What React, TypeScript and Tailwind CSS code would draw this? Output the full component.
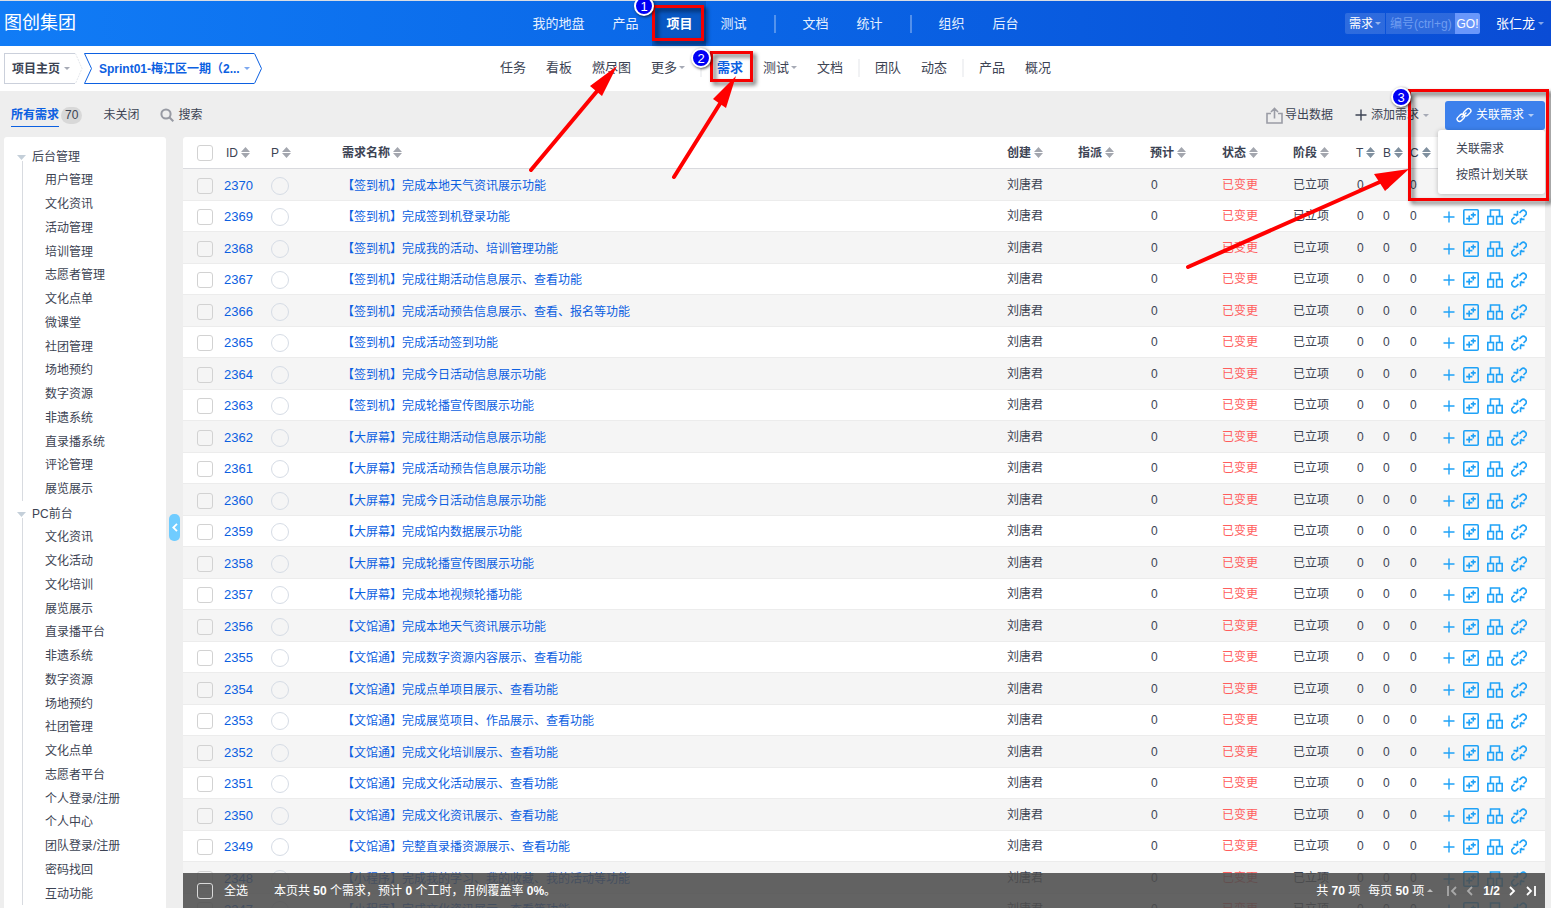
import { ReactNode } from "react";

type Story = { id: number; title: string };
type TreeGroup = { name: string; children: string[] };

const mainNav = [["我的地盘", "产品", "项目", "测试"], ["文档", "统计"], ["组织", "后台"]];

const subNav = [
  [{ name: "任务" }, { name: "看板" }, { name: "燃尽图" }, { name: "更多", caret: true }],
  [{ name: "需求" }, { name: "测试", caret: true }, { name: "文档" }],
  [{ name: "团队" }, { name: "动态" }],
  [{ name: "产品" }, { name: "概况" }],
];

const tree: TreeGroup[] = [
  {
    name: "后台管理",
    children: ["用户管理", "文化资讯", "活动管理", "培训管理", "志愿者管理", "文化点单", "微课堂", "社团管理", "场地预约", "数字资源", "非遗系统", "直录播系统", "评论管理", "展览展示"],
  },
  {
    name: "PC前台",
    children: ["文化资讯", "文化活动", "文化培训", "展览展示", "直录播平台", "非遗系统", "数字资源", "场地预约", "社团管理", "文化点单", "志愿者平台", "个人登录/注册", "个人中心", "团队登录/注册", "密码找回", "互动功能"],
  },
];

const stories: Story[] = [
  { id: 2370, title: "【签到机】完成本地天气资讯展示功能" },
  { id: 2369, title: "【签到机】完成签到机登录功能" },
  { id: 2368, title: "【签到机】完成我的活动、培训管理功能" },
  { id: 2367, title: "【签到机】完成往期活动信息展示、查看功能" },
  { id: 2366, title: "【签到机】完成活动预告信息展示、查看、报名等功能" },
  { id: 2365, title: "【签到机】完成活动签到功能" },
  { id: 2364, title: "【签到机】完成今日活动信息展示功能" },
  { id: 2363, title: "【签到机】完成轮播宣传图展示功能" },
  { id: 2362, title: "【大屏幕】完成往期活动信息展示功能" },
  { id: 2361, title: "【大屏幕】完成活动预告信息展示功能" },
  { id: 2360, title: "【大屏幕】完成今日活动信息展示功能" },
  { id: 2359, title: "【大屏幕】完成馆内数据展示功能" },
  { id: 2358, title: "【大屏幕】完成轮播宣传图展示功能" },
  { id: 2357, title: "【大屏幕】完成本地视频轮播功能" },
  { id: 2356, title: "【文馆通】完成本地天气资讯展示功能" },
  { id: 2355, title: "【文馆通】完成数字资源内容展示、查看功能" },
  { id: 2354, title: "【文馆通】完成点单项目展示、查看功能" },
  { id: 2353, title: "【文馆通】完成展览项目、作品展示、查看功能" },
  { id: 2352, title: "【文馆通】完成文化培训展示、查看功能" },
  { id: 2351, title: "【文馆通】完成文化活动展示、查看功能" },
  { id: 2350, title: "【文馆通】完成文化资讯展示、查看功能" },
  { id: 2349, title: "【文馆通】完整直录播资源展示、查看功能" },
  { id: 2348, title: "【小程序】完成我的学习、我的收藏、我的活动等功能" },
  { id: 2347, title: "【小程序】完成文化资讯展示、查看等功能" },
];

const Caret = ({ className = "text-[#a6aab5]" }: { className?: string }) => (
  <svg className={`h-[3px] w-[6px] shrink-0 ${className}`} viewBox="0 0 6 3" fill="currentColor" aria-hidden="true">
    <path d="M0 0h6L3 3z" />
  </svg>
);

const SortIcon = ({ className = "text-[#a3a6ae]" }: { className?: string }) => (
  <svg className={`h-[11px] w-[9px] shrink-0 ${className}`} viewBox="0 0 9 11" fill="currentColor" aria-hidden="true">
    <path d="M4.5 0L9 5H0zM4.5 11L0 6h9z" />
  </svg>
);

const SortHead = ({ name, bold = true, iconClass }: { name: string; bold?: boolean; iconClass?: string }) => (
  <button className={`flex items-center gap-[3px] ${bold ? "font-bold" : "font-normal"}`}>
    {name}
    <SortIcon className={iconClass} />
  </button>
);

const Checkbox = ({ label, className = "border-[#d2d2d2]" }: { label: string; className?: string }) => (
  <input type="checkbox" aria-label={label} className={`block size-4 shrink-0 appearance-none rounded-[3px] border ${className}`} />
);

const Op = ({ label, children, className = "w-4" }: { label: string; children: ReactNode; className?: string }) => (
  <button aria-label={label} className={`h-4 shrink-0 ${className}`}>
    {children}
  </button>
);

const Operations = () => (
  <div className="flex items-center gap-2 pl-[13px] text-[#1fa2f7]">
    <Op label="分解任务" className="w-3">
      <svg viewBox="0 0 12 16" fill="none" stroke="currentColor" strokeWidth="1.4">
        <path d="M6 2.5v11M.5 8h11" />
      </svg>
    </Op>
    <Op label="批量分解">
      <svg viewBox="0 0 16 16" fill="none" stroke="currentColor" strokeWidth="1.6">
        <rect x=".8" y=".8" width="14.4" height="14.4" rx="1" />
        <path d="M6.200 6.500v6.200M3.200 9.600h6.200M10.300 3.400v5M7.800 5.900h5" />
      </svg>
    </Op>
    <Op label="建用例">
      <svg viewBox="0 0 16 16" fill="none" stroke="currentColor" strokeWidth="1.6">
        <path d="M3.500 7.500V1h9v6.500" />
        <rect x=".8" y="7.500" width="5.600" height="7.500" />
        <rect x="9.600" y="7.500" width="5.600" height="7.500" />
      </svg>
    </Op>
    <Op label="移除需求">
      <svg viewBox="0 0 16 16" fill="none" stroke="currentColor" strokeWidth="1.6">
        <path d="M8.500 4l1.800-1.900a2.900 2.900 0 0 1 4.100 4.100L12.500 8M7.500 12l-1.800 1.900a2.900 2.900 0 0 1-4.100-4.100L3.500 8" />
        <path d="M2.500 5.600h4V1.800M9.500 14.200v-3.800h4M6.500 5.600L5 7M9.500 10.400L11 9" />
      </svg>
    </Op>
  </div>
);

const Header = () => (
  <header className="grid h-[46px] shrink-0 grid-cols-[1fr_auto_1fr] items-center border-t border-[#d9dde4] bg-linear-to-r from-[#117cf6] to-[#0a4cd5] text-[13px] text-white">
    <h1 className="pl-1 text-[18px]">图创集团</h1>
    <nav className="flex h-full items-center text-[#e6f0ff]">
      {mainNav.map((group, index) => (
        <div key={index} className="flex h-full items-center">
          {index > 0 && <span className="mx-[13px] h-[18px] w-[2px] bg-white/30" />}
          {group.map((name) => (
            <a key={name} href="#" className={`flex h-full items-center px-[14px] ${name === "项目" ? "bg-black/15 font-bold text-white" : ""}`}>
              {name}
            </a>
          ))}
        </div>
      ))}
    </nav>
    <div className="flex items-center justify-end gap-4 pr-[7px]">
      <form className="flex h-[21px] items-stretch overflow-hidden rounded-[2px] text-[12px]">
        <div className="relative mr-px flex w-10 items-center bg-white/15">
          <select aria-label="类型" className="h-full w-full appearance-none pl-1 leading-[20px] focus:outline-none">
            <option>需求</option>
          </select>
          <Caret className="pointer-events-none absolute right-1 text-white/50" />
        </div>
        <input type="text" aria-label="编号" placeholder="编号(ctrl+g)" className="w-[69px] bg-white/15 pl-1 placeholder:text-[#6f9cf0] focus:outline-none" />
        <button type="button" className="w-[25px] bg-[#6a97fb]">GO!</button>
      </form>
      <button className="flex items-center gap-[3px]">
        张仁龙
        <Caret className="text-white/50" />
      </button>
    </div>
  </header>
);

const SubHeader = () => (
  <div className="grid h-[45px] shrink-0 grid-cols-[1fr_auto_1fr] items-center bg-white">
    <div className="flex items-center pl-1 text-[12px] font-bold">
      <button className="flex h-[31px] w-[71px] items-center gap-1 border-y border-l border-[#cbd0db] pl-[7px]">
        项目主页
        <Caret />
      </button>
      <svg className="h-[31px] w-[9px]" viewBox="0 0 9 31" fill="none" stroke="#e4e7ec" strokeDasharray="2 1">
        <path d="M.5.5L7 15.500L.5 30.500" />
      </svg>
      <svg className="h-[31px] w-[8px]" viewBox="0 0 8 31" fill="none" stroke="#0c60e1">
        <path d="M8 .5H.5L7.500 15.500L.5 30.500H8" />
      </svg>
      <button className="flex h-[31px] w-[162px] items-center justify-between border-y border-[#0c60e1] pr-1 pl-[7px] text-[#0c60e1]">
        Sprint01-梅江区一期（2...
        <Caret className="text-[#7da8ef]" />
      </button>
      <svg className="h-[31px] w-[8px]" viewBox="0 0 8 31" fill="none" stroke="#0c60e1">
        <path d="M.5 .5L7.500 15.500L.5 30.500" />
      </svg>
    </div>
    <nav className="flex items-center pb-[2px] text-[13px]">
      {subNav.map((group, index) => (
        <div key={index} className="flex items-center">
          {index > 0 && <span className="mx-[5px] h-[18px] w-[2px] bg-[#f1f2f4]" />}
          {group.map((item: { name: string; caret?: boolean }) => (
            <a key={item.name} href="#" className={`flex items-center gap-[2px] px-[10px] ${item.name === "需求" ? "font-bold text-[#0c60e1]" : ""}`}>
              {item.name}
              {item.caret && <Caret />}
            </a>
          ))}
        </div>
      ))}
    </nav>
  </div>
);

const Toolbar = () => (
  <div className="flex h-[46px] shrink-0 items-center justify-between pt-[2px] pr-[6px] pl-[11px] text-[12px]">
    <div className="flex items-center">
      <a href="#" className="flex items-center gap-[2px]">
        <span className="border-b border-[#0c60e1] leading-[22px] font-bold text-[#0c60e1]">所有需求</span>
        <span className="rounded-full bg-[#d8d8d8] px-[4px] leading-[17px]">70</span>
      </a>
      <a href="#" className="ml-[21px]">未关闭</a>
      <button className="ml-[21px] flex items-center gap-1">
        <svg className="size-[14px]" viewBox="0 0 14 14" fill="none" stroke="#979aa3" strokeWidth="2">
          <circle cx="6" cy="6" r="4.600" />
          <path d="M9.300 9.300l4 4" />
        </svg>
        搜索
      </button>
    </div>
    <div className="flex items-center">
      <button className="flex items-center gap-[2px]">
        <svg className="size-[17px]" viewBox="0 0 17 17" fill="none" stroke="#9a9ca5" strokeWidth="1.600">
          <path d="M5 6.500H1v9.500h15V6.500h-4M8.500 11.500V1.500M5 5l3.500-3.600L12 5" />
        </svg>
        导出数据
      </button>
      <button className="ml-[22px] flex items-center gap-1">
        <svg className="size-[12px]" viewBox="0 0 12 12" fill="none" stroke="#3c4353" strokeWidth="1.400">
          <path d="M6 .5v11M.5 6h11" />
        </svg>
        添加需求
        <Caret />
      </button>
      <div className="relative ml-4">
        <button className="flex h-[29px] w-[100px] items-center justify-center gap-1 rounded-[3px] bg-[#3c80ec] text-white">
          <svg className="size-4" viewBox="0 0 16 16" fill="none" stroke="currentColor" strokeWidth="1.400">
            <rect x="7" y="2.800" width="8.400" height="4.800" rx="2.400" transform="rotate(-45 11.200 5.200)" />
            <rect x=".6" y="8.400" width="8.400" height="4.800" rx="2.400" transform="rotate(-45 4.800 10.800)" />
            <path d="M5.600 10.400l4.800-4.800" />
          </svg>
          关联需求
          <Caret className="text-white/60" />
        </button>
        <ul className="absolute top-full right-0 z-10 w-[107px] rounded-[3px] bg-white py-[6px] shadow-[0_1px_5px_rgba(0,0,0,0.25)]">
          <li><a href="#" className="block pl-[18px] leading-[26px]">关联需求</a></li>
          <li><a href="#" className="block pl-[18px] leading-[26px]">按照计划关联</a></li>
        </ul>
      </div>
    </div>
  </div>
);

const Sidebar = () => (
  <aside className="w-[162px] shrink-0 overflow-hidden rounded-t-[3px] bg-white pt-[9px] text-[12px]">
    <ul>
      {tree.map((group) => (
        <li key={group.name} className="relative mb-[2px] before:absolute before:top-[15px] before:bottom-0 before:left-[18px] before:w-px before:bg-[#d8dbe0]">
          <button className="flex h-[22px] items-center gap-[6px] pl-[13px]">
            <svg className="h-[5px] w-[9px]" viewBox="0 0 9 5" fill="#c4cfd9">
              <path d="M0 0h9L4.500 5z" />
            </svg>
            {group.name}
          </button>
          <ul className="pl-[41px]">
            {group.children.map((name, index) => (
              <li key={index} className="flex h-6 items-center nth-[4n]:h-[23px]">
                <a href="#">{name}</a>
              </li>
            ))}
          </ul>
        </li>
      ))}
    </ul>
  </aside>
);

const StoryTable = () => (
  <table className="w-full table-fixed border-separate border-spacing-0 text-left text-[12px]">
    <colgroup>
      <col className="w-[80px]" />
      <col className="w-[71px]" />
      <col />
      <col className="w-[71px]" />
      <col className="w-[72px]" />
      <col className="w-[72px]" />
      <col className="w-[71px]" />
      <col className="w-[64px]" />
      <col className="w-[27px]" />
      <col className="w-[27px]" />
      <col className="w-[27px]" />
      <col className="w-[115px]" />
    </colgroup>
    <thead>
      <tr className="h-8 *:border-b *:border-[#d9dade]">
        <th>
          <div className="flex items-center gap-[13px] pl-[14px]">
            <Checkbox label="全选" />
            <SortHead name="ID" bold={false} />
          </div>
        </th>
        <th className="pl-2"><SortHead name="P" bold={false} /></th>
        <th className="pl-2"><SortHead name="需求名称" /></th>
        <th className="pl-2"><SortHead name="创建" /></th>
        <th className="pl-2"><SortHead name="指派" /></th>
        <th className="pl-2"><SortHead name="预计" /></th>
        <th className="pl-2"><SortHead name="状态" /></th>
        <th className="pl-2"><SortHead name="阶段" /></th>
        {["T", "B", "C"].map((name) => (
          <th key={name} className="pl-[7px]"><SortHead name={name} bold={false} iconClass="text-[#80909f]" /></th>
        ))}
        <th />
      </tr>
    </thead>
    <tbody>
      {stories.map((story) => (
        <tr key={story.id} className="h-8 odd:bg-[#f5f5f5] even:h-[31px] *:border-b *:border-[#ececec]">
          <td className="pt-[2px]">
            <div className="flex items-center gap-[11px] pl-[14px] text-[13px]">
              <Checkbox label={`选择 ${story.id}`} />
              <a href="#" className="text-[#0c60e1]">{story.id}</a>
            </div>
          </td>
          <td className="pt-[2px] pl-2"><span className="block size-[18px] rounded-full border border-[#d6dce5]" /></td>
          <td className="truncate pt-[2px] pl-2"><a href="#" className="text-[#0c60e1]">{story.title}</a></td>
          <td className="pl-2">刘唐君</td>
          <td />
          <td className="pl-[9px]">0</td>
          <td className="pl-2 text-[#ff5d5d]">已变更</td>
          <td className="pl-2">已立项</td>
          <td className="pl-2">0</td>
          <td className="pl-[7px]">0</td>
          <td className="pl-[7px]">0</td>
          <td className="pt-[2px]"><Operations /></td>
        </tr>
      ))}
    </tbody>
  </table>
);

const PageArrow = ({ label, path, dim }: { label: string; path: string; dim?: boolean }) => (
  <button aria-label={label} className={dim ? "text-[#a9a9a9]" : "text-white"}>
    <svg className="h-[10px] w-[10px]" viewBox="0 0 10 10" fill="none" stroke="currentColor" strokeWidth="1.800">
      <path d={path} />
    </svg>
  </button>
);

const TableFooter = () => (
  <footer className="absolute inset-x-0 bottom-0 flex h-[35px] items-center justify-between bg-[#4d4d4d]/88 pr-[9px] pl-[14px] text-[12px] text-white">
    <div className="flex items-center">
      <label className="flex items-center gap-[11px]">
        <Checkbox label="全选" className="border-[#d9d9d9]" />
        全选
      </label>
      <p className="ml-[26px]">本页共 <b>50</b> 个需求，预计 <b>0</b> 个工时，用例覆盖率 <b>0%</b>。</p>
    </div>
    <div className="flex items-center">
      <span>共 <b>70</b> 项</span>
      <button className="ml-2 flex items-center gap-[3px]">
        <span>每页 <b>50</b> 项</span>
        <Caret className="rotate-180 text-[#bdbdbd]" />
      </button>
      <div className="ml-[14px] flex items-center gap-2">
        <PageArrow label="首页" path="M1 0v10M9 1L5 5l4 4" dim />
        <PageArrow label="上一页" path="M7 1L3 5l4 4" dim />
        <b>1/2</b>
        <PageArrow label="下一页" path="M2 1l4 4-4 4" />
        <PageArrow label="末页" path="M9 0v10M1 1l4 4-4 4" />
      </div>
    </div>
  </footer>
);

const StepBadge = ({ step, className }: { step: number; className: string }) => (
  <span className={`absolute flex size-5 items-center justify-center rounded-full border-2 border-white bg-[#0000f5] text-[13px] leading-none text-white shadow-[1px_1px_3px_rgba(0,0,0,0.7)] ${className}`}>
    {step}
  </span>
);

// red boxes, step numbers and arrows drawn on top of the page
const Annotations = () => (
  <div className="pointer-events-none absolute inset-0 z-20 overflow-hidden">
    <div className="absolute top-[5px] left-[652px] h-[36px] w-[52px] border-3 border-[#f70000] drop-shadow-[3px_3px_2px_rgba(0,0,0,0.6)]" />
    <div className="absolute top-[51px] left-[710px] h-[31px] w-[43px] border-3 border-[#f70000] drop-shadow-[3px_3px_2px_rgba(0,0,0,0.6)]" />
    <div className="absolute top-[89px] left-[1408px] h-[112px] w-[141px] border-3 border-[#f70000] drop-shadow-[3px_3px_2px_rgba(0,0,0,0.6)]" />
    <svg className="absolute inset-0 h-full w-full" fill="#ff0000" stroke="#ff0000" strokeWidth="4" strokeLinecap="round">
      <path d="M531 170L598 90M674 177L721 102M1188 267L1382 181" />
      <path stroke="none" d="M617 66L590 86L602 96zM736 76L713 99L726 108zM1409 169L1374 174L1385 191z" />
    </svg>
    <StepBadge step={1} className="top-[-4px] left-[634px]" />
    <StepBadge step={2} className="top-[48px] left-[691px]" />
    <StepBadge step={3} className="top-[87px] left-[1391px]" />
  </div>
);

const App = () => {
  return (
    <div className="relative flex h-screen flex-col overflow-hidden bg-[#eeeeee] font-['Liberation_Sans','Noto_Sans_CJK_SC',sans-serif] text-[#3c4353]">
      <Header />
      <SubHeader />
      <Toolbar />
      <div className="flex min-h-0 flex-1 pr-[6px] pl-1">
        <Sidebar />
        <div className="flex w-[17px] shrink-0 items-center justify-center pt-[10px]">
          <button aria-label="收起" className="flex h-[27px] w-[11px] items-center justify-center rounded-[5px] bg-[#70ccff]">
            <svg className="h-[9px] w-[6px]" viewBox="0 0 6 9" fill="none" stroke="#fff" strokeWidth="1.800">
              <path d="M5 .8L1.300 4.500L5 8.200" />
            </svg>
          </button>
        </div>
        <main className="relative min-w-0 flex-1 overflow-hidden rounded-t-[3px] bg-white">
          <StoryTable />
          <TableFooter />
        </main>
      </div>
      <Annotations />
    </div>
  );
};

export default App;
